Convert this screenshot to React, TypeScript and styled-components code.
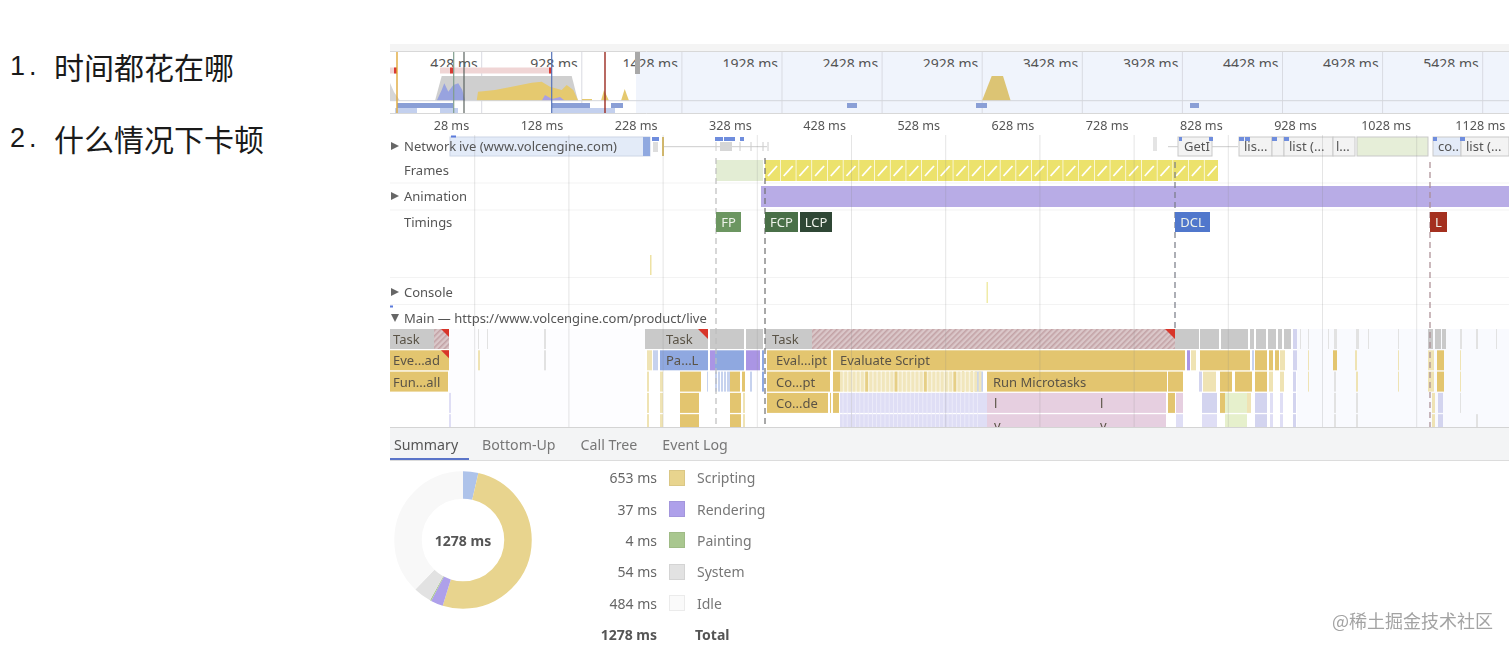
import React from "react";
import styled, { createGlobalStyle } from "styled-components";

const UI_FONT = '"Noto Sans", "Open Sans", sans-serif';

const GlobalStyle = createGlobalStyle`
  html, body {
    margin: 0;
    padding: 0;
    background: #fff;
  }
`;

const C = {
  gray: "#c9c9c9",
  yellow: "#e3c56f",
  paleYellow: "#efe3b4",
  blue: "#8fa8e0",
  paleBlue: "#c6d2ee",
  purple: "#aa95e4",
  lav: "#dfdef5",
  paleLav: "#d3d4ef",
  pink: "#e6cfe0",
  green: "#e6f0cc",
  tick: "#e2e2e2",
};

const overviewLabels = [428, 928, 1428, 1928, 2428, 2928, 3428, 3928, 4428, 4928, 5428];
const rulerLabels = [28, 128, 228, 328, 428, 528, 628, 728, 828, 928, 1028, 1128];
const gridXs = rulerLabels.map((_, i) => 474.7 + i * 94.2);

const OVERVIEW_BARS: [number, number, number, string][] = [
  [397, 453, 103, "#8a9fd6"],
  [395, 417, 108, "#c3d0ee"],
  [440, 458, 108, "#c3d0ee"],
  [552, 590, 103, "#8a9fd6"],
  [552, 615, 108, "#c3d0ee"],
  [611, 623, 103, "#8a9fd6"],
  [847, 857, 103, "#8a9fd6"],
  [976, 987, 103, "#8a9fd6"],
  [1190, 1199, 103, "#8a9fd6"],
];

type Seg = [number, number, string];

// rows of the flame chart, page x from / to, colour
const FLAME_ROWS: Seg[][] = [
  [
    [390, 449, C.gray], [478, 479, C.tick], [487, 488, C.tick], [544, 546, C.tick],
    [645, 708, C.gray], [710, 744, C.gray], [746, 763, C.gray], [765, 1175, C.gray],
    [1175, 1199, C.gray], [1200, 1219, C.gray], [1221, 1248, C.gray], [1250, 1254, C.gray],
    [1256, 1266, C.gray], [1268, 1276, C.gray], [1278, 1282, C.gray], [1284, 1291, C.gray],
    [1293, 1297, C.paleLav], [1300, 1301, C.tick], [1308, 1309, C.tick], [1328, 1329, C.tick],
    [1334, 1337, C.tick], [1356, 1359, C.tick], [1368, 1369, C.tick], [1398, 1399, C.tick],
    [1428, 1433, C.gray], [1435, 1441, C.gray], [1442, 1446, C.gray], [1460, 1462, C.tick],
    [1476, 1478, C.tick], [1496, 1497, C.tick],
  ],
  [
    [390, 449, C.yellow], [478, 480, C.paleYellow], [544, 546, C.tick],
    [647, 652, C.paleYellow], [653, 658, C.paleBlue], [660, 708, C.blue], [710, 715, C.purple],
    [715, 744, C.blue], [746, 760, C.purple], [762, 764, C.blue], [767, 831, C.yellow],
    [833, 1185, C.yellow], [1187, 1190, C.purple], [1191, 1196, C.paleYellow], [1200, 1250, C.yellow],
    [1252, 1254, C.paleBlue], [1255, 1267, C.yellow], [1269, 1273, C.yellow], [1275, 1279, C.yellow],
    [1280, 1285, C.paleYellow], [1293, 1297, C.paleLav], [1308, 1309, C.paleYellow], [1333, 1337, C.yellow],
    [1355, 1357, C.paleYellow], [1398, 1399, C.paleYellow], [1428, 1434, C.paleYellow], [1437, 1444, C.yellow],
    [1460, 1461, C.paleYellow],
  ],
  [
    [390, 448, C.yellow], [647, 649, C.paleYellow], [660, 663, C.paleYellow], [680, 701, C.yellow],
    [707, 708, C.paleBlue], [715, 717, C.paleBlue], [718, 720, C.paleBlue], [721, 723, C.paleBlue],
    [724, 726, C.paleBlue], [727, 730, C.paleBlue], [730, 740, C.yellow], [742, 745, C.yellow],
    [750, 752, C.paleBlue], [762, 764, C.blue], [767, 830, C.yellow], [833, 840, C.yellow],
    [840, 983, "#f8f2dc"],
    [962, 964, C.yellow], [971, 973, C.yellow],
    [975, 983, C.paleBlue], [987, 1167, C.yellow], [1168, 1183, C.yellow], [1199, 1202, C.paleLav],
    [1203, 1216, C.paleYellow], [1220, 1232, C.yellow], [1235, 1252, C.yellow], [1255, 1267, C.yellow],
    [1269, 1273, C.paleYellow], [1280, 1284, C.paleYellow], [1293, 1296, C.paleLav], [1308, 1309, C.paleYellow],
    [1334, 1336, C.tick], [1356, 1358, C.paleYellow], [1398, 1399, C.paleYellow], [1428, 1434, C.paleYellow],
    [1437, 1444, C.yellow], [1460, 1461, C.paleYellow],
  ],
  [
    [449, 451, C.lav], [647, 649, C.paleYellow], [660, 663, C.paleYellow], [680, 699, C.yellow],
    [730, 741, C.yellow], [743, 745, C.paleYellow],
    [767, 828, C.yellow], [830, 831, C.yellow], [833, 839, C.yellow], [840, 987, C.lav],
    [987, 1166, C.pink], [1168, 1175, C.yellow], [1176, 1183, C.pink], [1202, 1217, C.paleLav],
    [1220, 1225, C.yellow], [1225, 1247, C.green], [1247, 1251, C.paleYellow], [1255, 1267, C.paleLav],
    [1270, 1273, C.lav], [1280, 1283, C.lav], [1293, 1296, C.paleLav], [1334, 1336, C.tick],
    [1356, 1358, C.tick], [1432, 1435, C.paleYellow], [1438, 1443, C.paleLav], [1460, 1461, C.tick],
  ],
  [
    [449, 451, C.lav], [647, 649, C.paleYellow], [660, 663, C.paleYellow], [680, 699, C.yellow],
    [730, 741, C.yellow], [743, 745, C.paleYellow],
    [840, 987, C.lav], [987, 1166, C.pink], [1176, 1183, C.lav], [1202, 1217, C.lav],
    [1225, 1247, C.green], [1255, 1267, C.paleLav], [1270, 1273, C.lav], [1280, 1283, C.lav],
    [1293, 1296, C.paleLav], [1334, 1336, C.tick], [1356, 1358, C.tick], [1432, 1435, C.paleYellow],
    [1438, 1443, C.paleLav], [1476, 1478, C.tick],
  ],
];

const FLAME_TEXT: [number, number, string][] = [
  [393, 0, "Task"], [666, 0, "Task"], [772, 0, "Task"],
  [393, 1, "Eve...ad"], [666, 1, "Pa...L"], [776, 1, "Eval...ipt"], [840, 1, "Evaluate Script"],
  [393, 2, "Fun...all"], [776, 2, "Co...pt"], [993, 2, "Run Microtasks"],
  [776, 3, "Co...de"], [994, 3, "l"], [1100, 3, "l"],
];

const NETWORK_BLOCKS: [number, number, string, string?][] = [
  [1178, 1212, "#f3f3f3", "GetI"],
  [1239, 1272, "#f3f3f3", "lis..."],
  [1272, 1284, "#f3f3f3"],
  [1284, 1333, "#f3f3f3", "list (..."],
  [1333, 1355, "#f3f3f3", "l..."],
  [1357, 1428, "#e6eed8"],
  [1433, 1461, "#e3ebf8", "co.."],
  [1461, 1509, "#f3f3f3", "list (..."],
];

const NETWORK_CAPS = [
  [1179, 1182], [1209, 1213], [1239, 1244], [1245, 1250], [1272, 1277], [1284, 1289],
  [1433, 1437], [1460, 1465], [715, 723], [724, 735], [740, 744], [652, 659],
];

const TIMING_CHIPS: [number, number, string, string][] = [
  [716, 741, "#6c9661", "FP"],
  [765, 798, "#4a7048", "FCP"],
  [800, 832, "#2f4735", "LCP"],
  [1175, 1210, "#5077cc", "DCL"],
  [1430, 1447, "#a4301f", "L"],
];

const DASHED: [number, number, number, string][] = [
  [716, 158, 427, "#bdbdbd"],
  [765, 158, 427, "#6f6f6f"],
  [1175, 162, 329, "#777b85"],
  [1430, 162, 427, "#a88a90"],
];

const frameXs = Array.from({ length: 29 }, (_, i) => 765 + i * 15.7);
const stripeXs = Array.from({ length: 34 }, (_, i) => 840 + i * 4.2);

const SUMMARY = [
  { value: "653 ms", color: "#e8d48e", label: "Scripting" },
  { value: "37 ms", color: "#aea0ea", label: "Rendering" },
  { value: "4 ms", color: "#a9c78f", label: "Painting" },
  { value: "54 ms", color: "#e2e2e2", label: "System" },
  { value: "484 ms", color: "#fafafa", label: "Idle" },
];

const SLICES: [number, string][] = [
  [3.6, "#aec3ea"],
  [51.1, "#e8d48e"],
  [2.9, "#aea0ea"],
  [0.3, "#a9c78f"],
  [4.2, "#e2e2e2"],
  [37.9, "#f8f8f8"],
];

function Overview() {
  return (
    <OverviewChart viewBox="390 51 1119 63">
      <defs>
        <clipPath id="labelClip">
          <rect x="390" y="52" width="1119" height="15" />
        </clipPath>
      </defs>
      <rect x="390" y="51" width="1119" height="63" fill="#f0f4fc" />
      <rect x="390" y="52" width="246" height="61" fill="#fff" />
      {overviewLabels.map((n, i) => (
        <line key={n} x1={481.7 + i * 100.1} x2={481.7 + i * 100.1} y1="52" y2="113" stroke="#d9dbe2" />
      ))}
      <g clipPath="url(#labelClip)">
        {overviewLabels.map((n, i) => (
          <text key={n} x={477.7 + i * 100.1} y="68.5" textAnchor="end" fontSize="14" fill="#555" fontFamily={UI_FONT}>
            {n} ms
          </text>
        ))}
      </g>
      <rect x="390" y="67.5" width="7" height="6" fill="#f0d5d5" />
      <rect x="440" y="67.5" width="112" height="6" fill="#f0d5d5" />
      <rect x="394" y="67.5" width="3" height="6" fill="#d83a33" />
      <rect x="450" y="67.5" width="3" height="6" fill="#d83a33" />
      <rect x="549" y="67.5" width="3" height="6" fill="#d83a33" />
      <polygon points="390,83 394,92 400,100.7 390,100.7" fill="#d6d6d6" />
      <polygon points="435,100.7 441.7,76 571.7,76 578,100.7" fill="#cfcfcf" />
      <polygon
        points="476.7,100.7 478,91.7 495,90 511.7,86.7 531.7,82.7 541.7,81.7 550,86.7 561.7,90 566.7,85 573.3,90 578.3,100.7"
        fill="#e5c96f"
      />
      <polygon
        points="436.7,100.7 441.7,90 444.3,83.3 448.3,91.7 453.3,85 458.3,83.3 462.3,90 465,100.7"
        fill="#98a3df"
      />
      <polygon points="541.7,100.7 545,95 552,99 560,97 565,100.7" fill="#a9a0e2" />
      <polygon points="601,100.7 604,90 609,100.7" fill="#e5c96f" />
      <polygon points="621,100.7 624.7,89 629,100.7" fill="#e5c96f" />
      <rect x="582" y="99" width="10" height="1.7" fill="#e5c96f" />
      <polygon points="982,100.7 991.7,76 1003,76 1010.7,100.7" fill="#dcc474" />
      <line x1="390" x2="1509" y1="100.7" y2="100.7" stroke="#d3d5db" />
      {OVERVIEW_BARS.map(([a, b, y, fill]) => (
        <rect key={`${a}-${y}`} x={a} y={y} width={b - a} height="5" fill={fill} />
      ))}
      <line x1="397" x2="397" y1="52" y2="113" stroke="#e0a93a" strokeWidth="1.4" />
      <line x1="453.7" x2="453.7" y1="52" y2="113" stroke="#7f9d8c" strokeWidth="1.2" />
      <line x1="464" x2="464" y1="52" y2="113" stroke="#5b6360" strokeWidth="1.2" />
      <line x1="551.7" x2="551.7" y1="52" y2="113" stroke="#5573b8" strokeWidth="1.2" />
      <line x1="605" x2="605" y1="52" y2="113" stroke="#9b2a20" strokeWidth="1.4" />
      <rect x="635" y="52" width="5" height="22" fill="#a8a8a8" />
      <line x1="390" x2="1509" y1="51.5" y2="51.5" stroke="#d8d8d8" />
      <line x1="390" x2="1509" y1="113.5" y2="113.5" stroke="#d8d8d8" />
    </OverviewChart>
  );
}

function TimelineChart() {
  const rowY = (i: number) => 329 + i * 21.3;
  return (
    <Chart viewBox="390 135 1119 292">
      <defs>
        <pattern id="hatch" width="4" height="4" patternUnits="userSpaceOnUse" patternTransform="rotate(45)">
          <rect width="4" height="4" fill="#dac7c9" />
          <rect width="1.6" height="4" fill="#c3a3a6" />
        </pattern>
        <clipPath id="framesClip">
          <rect x="765" y="160" width="453" height="21" />
        </clipPath>
      </defs>

      {/* flame area backdrop */}
      <rect x="449" y="329" width="196" height="98" fill="#fdfdff" />
      <rect x="1297" y="329" width="212" height="98" fill="#f9fafe" />

      {/* row separators */}
      {[183, 210, 277.5, 304.5].map((y) => (
        <line key={y} x1="390" x2="1509" y1={y} y2={y} stroke="#f3f3f3" />
      ))}

      {/* network track */}
      <rect x="450" y="137" width="200" height="19" fill="#e3ebf8" stroke="#cdd6e6" />
      <rect x="643" y="137" width="7" height="19" fill="#90a9e0" />
      <rect x="451" y="135.5" width="5" height="2" fill="#5b7bdc" />
      <rect x="653" y="142" width="5" height="10" fill="#ddd" />
      <rect x="662" y="137" width="2" height="19" fill="#d9bd6a" />
      <line x1="664" x2="767" y1="146.7" y2="146.7" stroke="#ccc" />
      <rect x="720" y="142" width="12" height="9" fill="#d6d6d6" />
      {[716, 740, 751, 763, 768].map((x) => (
        <line key={x} x1={x} x2={x} y1="142" y2="151" stroke="#ccc" />
      ))}
      <rect x="1153" y="137" width="4" height="14" fill="#e4e4e4" />
      <line x1="1168" x2="1238" y1="146.7" y2="146.7" stroke="#ccc" />
      {NETWORK_BLOCKS.map(([a, b, fill]) => (
        <rect key={a} x={a} y="137" width={b - a} height="19" fill={fill} stroke="#c9c9c9" />
      ))}
      {NETWORK_CAPS.map(([a, b]) => (
        <rect key={a} x={a} y="137" width={b - a} height="4" fill="#6f8ddd" />
      ))}
      <text x="459" y="151" fontSize="13" fill="#555" fontFamily={UI_FONT}>
        ive (www.volcengine.com)
      </text>
      {NETWORK_BLOCKS.map(([a, , , label]) =>
        label ? (
          <text key={a} x={a + (label === "GetI" ? 6 : label === "l..." ? 3 : 5)} y="151" fontSize="13" fill="#555" fontFamily={UI_FONT}>
            {label}
          </text>
        ) : null
      )}

      {/* frames track */}
      <rect x="716" y="160" width="47" height="21" fill="#e3edd4" />
      <g clipPath="url(#framesClip)">
        {frameXs.map((x) => (
          <g key={x}>
            <rect x={x} y="160" width="15" height="21" fill="#ece26c" />
            <line x1={x + 3} x2={x + 12} y1="176" y2="166" stroke="#fff" strokeWidth="1.8" />
          </g>
        ))}
      </g>

      {/* animation track */}
      <rect x="761" y="186" width="748" height="21" fill="#b8ace6" />

      {/* console and stray marks */}
      <rect x="650" y="255" width="1.5" height="20" fill="#eee2a4" />
      <rect x="986.5" y="282" width="1.5" height="21" fill="#f0eba8" />
      <rect x="390" y="133" width="3" height="2" fill="#5b7bdc" />
      <rect x="390" y="305.5" width="3" height="2" fill="#5b7bdc" />

      {/* flame chart */}
      {FLAME_ROWS.map((row, i) =>
        row.map(([a, b, fill]) => (
          <rect key={`${i}-${a}`} x={a} y={rowY(i)} width={b - a} height="20" fill={fill} />
        ))
      )}
      {stripeXs.map((x, i) => (
        <rect key={x} x={x} y={rowY(2)} width="2.8" height="20" fill={i % 7 === 6 ? "#e6cf86" : "#f1e6bc"} />
      ))}
      {stripeXs.slice(0, 33).map((x) => (
        <rect key={x} x={x + 2.6} y={rowY(3)} width="0.8" height="41" fill="#eeedfa" />
      ))}
      <rect x="434" y="329" width="15" height="20" fill="url(#hatch)" />
      <rect x="812" y="329" width="363" height="20" fill="url(#hatch)" />
      <polygon points="441,329 449,329 449,337" fill="#d8352a" />
      <polygon points="441,350.3 449,350.3 449,358.3" fill="#d8352a" />
      <polygon points="698,329 708,329 708,339" fill="#d8352a" />
      <polygon points="1165,329 1175,329 1175,339" fill="#d8352a" />
      {FLAME_TEXT.map(([x, r, t]) => (
        <text key={`${x}-${r}`} x={x} y={rowY(r) + 15} fontSize="13" fill="#5a5346" fontFamily={UI_FONT}>
          {t}
        </text>
      ))}
      <text x="994" y="430" fontSize="13" fill="#5a5346" fontFamily={UI_FONT}>v</text>
      <text x="1100" y="430" fontSize="13" fill="#5a5346" fontFamily={UI_FONT}>v</text>

      {/* grid lines */}
      {gridXs.map((x) => (
        <line key={x} x1={x} x2={x} y1="135" y2="427" stroke="#8a8a8a" strokeOpacity="0.22" />
      ))}

      {/* timing markers */}
      {DASHED.map(([x, y1, y2, stroke]) => (
        <line key={x} x1={x} x2={x} y1={y1} y2={y2} stroke={stroke} strokeDasharray="6 4" strokeWidth="1.2" />
      ))}
      {TIMING_CHIPS.map(([a, b, fill, label]) => (
        <g key={label}>
          <rect x={a} y="212" width={b - a} height="20" fill={fill} />
          <text x={(a + b) / 2} y="227" textAnchor="middle" fontSize="13" fill="#eef2ea" fontFamily={UI_FONT}>
            {label}
          </text>
        </g>
      ))}
    </Chart>
  );
}

function Donut() {
  const r = 55;
  const len = 2 * Math.PI * r;
  let acc = 0;
  return (
    <DonutBox>
      <svg width="140" height="140" viewBox="0 0 140 140">
        <g transform="rotate(-90 70 70)">
          {SLICES.map(([pct, color]) => {
            const dash = (pct / 100) * len;
            const el = (
              <circle
                key={color}
                cx="70"
                cy="70"
                r={r}
                fill="none"
                stroke={color}
                strokeWidth="27.5"
                strokeDasharray={`${dash} ${len - dash}`}
                strokeDashoffset={-acc}
              />
            );
            acc += dash;
            return el;
          })}
        </g>
      </svg>
      <DonutTotal>1278 ms</DonutTotal>
    </DonutBox>
  );
}

export default function App() {
  return (
    <Page>
      <GlobalStyle />
      <Notes>
        <Note>
          <NoteNum>1.</NoteNum>时间都花在哪
        </Note>
        <Note>
          <NoteNum>2.</NoteNum>什么情况下卡顿
        </Note>
      </Notes>
      <Panel>
        <TopStrip />
        <Overview />
        <Ruler>
          {rulerLabels.map((n) => (
            <RulerCell key={n}>{n} ms</RulerCell>
          ))}
        </Ruler>
        <Tracks>
          <TimelineChart />
          <TrackRow $h={22}>
            <Arrow />
            Network
          </TrackRow>
          <TrackRow $h={26}>Frames</TrackRow>
          <TrackRow $h={26}>
            <Arrow />
            Animation
          </TrackRow>
          <TrackRow $h={26}>Timings</TrackRow>
          <TrackRow $h={44} />
          <TrackRow $h={26}>
            <Arrow />
            Console
          </TrackRow>
          <TrackRow $h={26}>
            <Arrow $down />
            Main — https://www.volcengine.com/product/live
          </TrackRow>
        </Tracks>
        <Tabs>
          <Tab $active>Summary</Tab>
          <Tab>Bottom-Up</Tab>
          <Tab>Call Tree</Tab>
          <Tab>Event Log</Tab>
        </Tabs>
        <SummaryPane>
          <Donut />
          <Legend>
            {SUMMARY.map((row) => (
              <React.Fragment key={row.label}>
                <Value>{row.value}</Value>
                <Swatch $color={row.color} />
                <Name>{row.label}</Name>
              </React.Fragment>
            ))}
            <Value $bold>1278 ms</Value>
            <span />
            <Name $bold>Total</Name>
          </Legend>
        </SummaryPane>
      </Panel>
      <Watermark>@稀土掘金技术社区</Watermark>
    </Page>
  );
}

const Page = styled.div`
  position: relative;
  display: flex;
  width: 1512px;
  height: 650px;
  overflow: hidden;
  background: #fff;
`;

const Notes = styled.ol`
  display: flex;
  flex-direction: column;
  gap: 32px;
  flex: none;
  width: 390px;
  margin: 0;
  padding: 46px 0 0 10px;
  box-sizing: border-box;
  list-style: none;
`;

const Note = styled.li`
  display: flex;
  align-items: center;
  height: 40px;
  font-family: "Noto Sans CJK SC", sans-serif;
  font-size: 30px;
  color: #1a1a1a;
`;

const NoteNum = styled.span`
  width: 44px;
  font-family: "Liberation Sans", sans-serif;
  font-size: 27px;
  letter-spacing: 4px;
`;

const Panel = styled.div`
  display: flex;
  flex-direction: column;
  flex: none;
  width: 1119px;
  padding-top: 44px;
  font-family: ${UI_FONT};
  color: #555;
  filter: blur(0.4px);

  & > * {
    flex: none;
  }
`;

const TopStrip = styled.div`
  height: 7px;
  background: #f4f4f4;
`;

const OverviewChart = styled.svg`
  display: block;
  width: 1119px;
  height: 63px;
`;

const Ruler = styled.div`
  display: flex;
  box-sizing: border-box;
  height: 21px;
  overflow: hidden;
  font-size: 12.6px;
  line-height: 24px;
`;

const RulerCell = styled.span`
  flex: 0 0 94.2px;
  box-sizing: border-box;
  padding-right: 5.5px;
  text-align: right;
  white-space: nowrap;

  &:first-child {
    flex-basis: 84.7px;
  }
`;

const Tracks = styled.div`
  position: relative;
  height: 292px;
`;

const Chart = styled.svg`
  position: absolute;
  inset: 0;
  width: 1119px;
  height: 292px;
`;

const TrackRow = styled.div<{ $h: number }>`
  position: relative;
  display: flex;
  align-items: center;
  height: ${(p) => p.$h}px;
  padding-left: 14px;
  font-size: 13px;
  white-space: nowrap;
`;

const Arrow = styled.i<{ $down?: boolean }>`
  position: absolute;
  left: 1px;
  width: 0;
  height: 0;
  ${(p) =>
    p.$down
      ? `border-left: 4px solid transparent; border-right: 4px solid transparent; border-top: 8px solid #666;`
      : `border-top: 4px solid transparent; border-bottom: 4px solid transparent; border-left: 8px solid #666;`}
`;

const Tabs = styled.div`
  display: flex;
  gap: 1px;
  box-sizing: border-box;
  height: 34px;
  background: #f3f4f5;
  border-top: 1px solid #d4d4d4;
  border-bottom: 1px solid #dcdcdc;
`;

const Tab = styled.div<{ $active?: boolean }>`
  display: flex;
  align-items: center;
  padding: 0 ${(p) => (p.$active ? "4px" : "12px")};
  min-width: ${(p) => (p.$active ? "71px" : "0")};
  font-size: 14.2px;
  color: ${(p) => (p.$active ? "#555" : "#777")};
  box-shadow: ${(p) => (p.$active ? "inset 0 -2px 0 #5a74c8" : "none")};
`;

const SummaryPane = styled.div`
  display: flex;
  align-items: flex-start;
  padding: 9px 0 0 3px;
`;

const DonutBox = styled.div`
  position: relative;
  width: 140px;
  height: 140px;
`;

const DonutTotal = styled.div`
  position: absolute;
  inset: 0;
  display: flex;
  align-items: center;
  justify-content: center;
  font-size: 14px;
  font-weight: 700;
  color: #555;
`;

const Legend = styled.div`
  display: grid;
  grid-template-columns: 124px 16px auto;
  grid-auto-rows: 31.4px;
  column-gap: 12px;
  align-items: center;
  margin-top: -8px;
  font-size: 14px;
`;

const Value = styled.span<{ $bold?: boolean }>`
  text-align: right;
  white-space: nowrap;
  font-weight: ${(p) => (p.$bold ? 700 : 400)};
  color: ${(p) => (p.$bold ? "#555" : "#666")};
`;

const Swatch = styled.span<{ $color: string }>`
  width: 16px;
  height: 16px;
  box-sizing: border-box;
  background: ${(p) => p.$color};
  border: 1px solid rgba(0, 0, 0, 0.06);
`;

const Name = styled.span<{ $bold?: boolean }>`
  margin-left: ${(p) => (p.$bold ? "-2px" : "0")};
  font-weight: ${(p) => (p.$bold ? 700 : 400)};
  color: ${(p) => (p.$bold ? "#555" : "#777")};
`;

const Watermark = styled.div`
  position: absolute;
  right: 19px;
  top: 608px;
  font-family: "Noto Sans CJK SC", sans-serif;
  font-size: 18px;
  line-height: 24px;
  color: #a3a3a3;
`;
